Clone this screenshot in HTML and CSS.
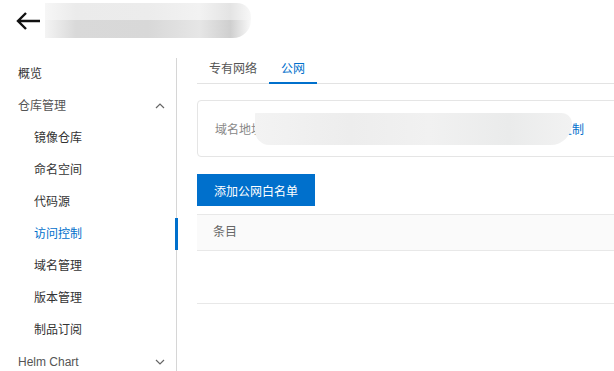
FILE: index.html
```html
<!DOCTYPE html>
<html lang="zh-CN">
<head>
  <meta charset="UTF-8">
  <meta name="viewport" content="width=device-width, initial-scale=1.0">
  <title>访问控制</title>
  <link rel="stylesheet" href="styles.css">
</head>
<body>
  <div class="topbar">
    <a class="back" href="#">
      <svg width="26" height="22" viewBox="0 0 26 22">
        <path d="M25 11H3M11 3L3 11l8 8" fill="none" stroke="#111" stroke-width="2.4"/>
      </svg>
    </a>
    <!-- instance name is blurred in the original -->
    <div class="title-blur">
      <div class="blur-top"></div>
      <div class="blur-bottom"></div>
    </div>
  </div>

  <div class="layout">
    <div class="sidebar">
      <div class="nav-item">概览</div>
      <div class="nav-item nav-group">仓库管理
        <svg class="chev" width="10" height="6" viewBox="0 0 10 6"><path d="M1 5l4-4 4 4" fill="none" stroke="#666" stroke-width="1.2"/></svg>
      </div>
      <div class="nav-item sub">镜像仓库</div>
      <div class="nav-item sub">命名空间</div>
      <div class="nav-item sub">代码源</div>
      <div class="nav-item sub active">访问控制</div>
      <div class="nav-item sub">域名管理</div>
      <div class="nav-item sub">版本管理</div>
      <div class="nav-item sub">制品订阅</div>
      <div class="nav-item nav-group">Helm Chart
        <svg class="chev" width="10" height="6" viewBox="0 0 10 6"><path d="M1 1l4 4 4-4" fill="none" stroke="#666" stroke-width="1.2"/></svg>
      </div>
    </div>

    <div class="content">
      <div class="tabs">
        <div class="tab">专有网络</div>
        <div class="tab active">公网</div>
      </div>

      <div class="card">
        <span class="card-label">域名地址</span>
        <span class="card-blur"></span>
        <a class="card-link" href="#">复制</a>
      </div>

      <button class="button">添加公网白名单</button>

      <div class="table">
        <div class="table-head">条目</div>
        <div class="table-empty"></div>
      </div>
    </div>
  </div>
</body>
</html>
```

FILE: styles.css
```css
html, body {
  margin: 0;
  overflow: hidden;
}
body {
  font-family: "Liberation Sans", "Noto Sans CJK SC", sans-serif;
  font-size: 12px;
  color: #333;
  background: #fff;
}
.topbar {
  height: 58px;
  display: flex;
  align-items: flex-start;
}
.back {
  display: block;
  margin: 10px 0 0 15px;
  height: 22px;
}
.title-blur {
  margin: 3px 0 0 4px;
  width: 206px;
  height: 35px;
  border-radius: 0 14px 18px 0;
  overflow: hidden;
}
.blur-top {
  height: 17px;
  background: linear-gradient(90deg, #f6f6f6 0%, #ebebeb 15%, #ececec 50%, #f2f2f2 75%, #e4e4e4 90%, #f8f8f8 100%);
}
.blur-bottom {
  height: 18px;
  background: linear-gradient(90deg, #f4f4f4 0%, #d9d9d9 15%, #d8d8d8 50%, #e6e6e6 75%, #cfcfcf 90%, #fafafa 100%);
}
.layout {
  display: flex;
}
.sidebar {
  width: 176px;
  flex: none;
  border-right: 1px solid #d6d6d6;
  min-height: 320px;
}
.nav-item {
  position: relative;
  height: 32px;
  line-height: 32px;
  padding-left: 18px;
  color: #333;
  display: flex;
  align-items: center;
  justify-content: space-between;
  padding-right: 11px;
}
.nav-group {
  color: #555;
}
.nav-item.sub {
  padding-left: 34px;
}
.nav-item.active {
  color: #0070cc;
}
.nav-item.active::after {
  content: "";
  position: absolute;
  right: -2px;
  top: 0;
  width: 3px;
  height: 32px;
  background: #0070cc;
}
.content {
  width: 440px;
  flex: none;
  padding-left: 20px;
}
.tabs {
  display: flex;
  height: 25px;
  border-bottom: 1px solid #e3e3e3;
}
.tab {
  height: 24px;
  line-height: 22px;
  padding: 0 12px;
  color: #555;
  border-bottom: 2px solid transparent;
}
.tab.active {
  color: #0070cc;
  border-bottom-color: #0070cc;
}
.card {
  margin-top: 16px;
  height: 55px;
  border: 1px solid #e5e5e5;
  border-radius: 4px;
  display: flex;
  align-items: center;
  padding-left: 17px;
}
.card-label {
  color: #888;
}
.card-blur {
  position: relative;
  z-index: 1;
  width: 317px;
  height: 32px;
  margin-left: -8px;
  border-radius: 2px 30px 60px 40px;
  background: linear-gradient(90deg, #f3f3f3 0%, #ededed 30%, #f1f1f1 55%, #eaebeb 80%, #f2f2f2 100%);
}
.card-link {
  color: #0070cc;
  text-decoration: none;
  margin-left: -12px;
}
.button {
  display: block;
  margin-top: 17px;
  height: 32px;
  padding: 0 17px;
  border: none;
  border-radius: 0;
  background: #0070cc;
  color: #fff;
  font-family: inherit;
  font-size: 12px;
}
.table {
  margin-top: 8px;
}
.table-head {
  height: 35px;
  line-height: 35px;
  padding-left: 16px;
  color: #666;
  background: #fafafa;
  border-top: 1px solid #e8e8e8;
  border-bottom: 1px solid #e8e8e8;
}
.table-empty {
  height: 52px;
  border-bottom: 1px solid #e8e8e8;
}
```
